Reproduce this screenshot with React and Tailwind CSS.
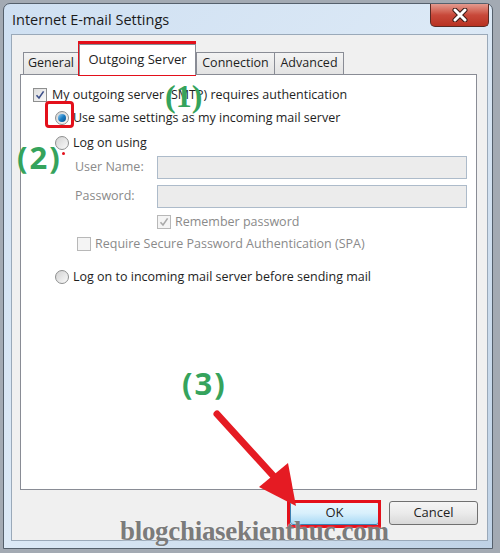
import React from 'react';

const UI = { fontFamily: '"Open Sans", "Noto Sans", sans-serif' };

function CheckBox({ checked, disabled }) {
  return (
    <span
      className={`flex h-[14px] w-[14px] shrink-0 items-center justify-center border ${
        disabled ? 'border-[#b8b8b8] bg-[#f4f4f4]' : 'border-[#8e8f8f] bg-gradient-to-br from-[#dcdcdc] to-[#fbfbfb]'
      }`}
    >
      {checked && (
        <svg width="10" height="10" viewBox="0 0 10 10">
          <path
            d="M1.5 5.2 L4 8 L8.6 1.4"
            fill="none"
            stroke={disabled ? '#a9a9a9' : '#3c4f8a'}
            strokeWidth="1.6"
          />
        </svg>
      )}
    </span>
  );
}

function Radio({ checked }) {
  return (
    <span className="flex h-[14px] w-[14px] shrink-0 items-center justify-center rounded-full border border-[#8e8f8f] bg-gradient-to-br from-[#d2d2d2] to-[#fafafa]">
      {checked && (
        <span className="h-[8px] w-[8px] rounded-full bg-gradient-to-br from-[#8fd0f4] via-[#1b7fc4] to-[#0b4d8c]" />
      )}
    </span>
  );
}

function Tab({ label, active, w }) {
  if (active) {
    return (
      <div
        className={`relative z-10 -mb-px flex h-[31px] items-start justify-center border border-b-0 border-[#898c95] bg-white pt-[5px] text-[13px] text-[#1e1e1e] ${w}`}
      >
        {label}
      </div>
    );
  }
  return (
    <div
      className={`flex h-[22px] items-center justify-center border border-b-0 border-[#898c95] bg-gradient-to-b from-[#f3f3f3] to-[#e3e3e3] text-[12.5px] text-[#1e1e1e] ${w}`}
    >
      {label}
    </div>
  );
}

export default function App() {
  return (
    <div className="relative h-[553px] w-[500px] overflow-hidden bg-[#a3aab3]" style={UI}>
      {/* window */}
      <div className="ml-[3px] pt-[3px]">
        <div className="flex h-[546px] w-[490px] flex-col rounded-t-[7px] border border-[#55606c] bg-gradient-to-br from-[#cfe0f2] via-[#dce9f6] to-[#bfd2e6]">
          {/* title bar */}
          <div className="flex h-[30px] shrink-0 items-start justify-between">
            <div className="pl-[8px] pt-[7px] text-[14.5px] leading-[18px] text-[#1b1b1b]">Internet E-mail Settings</div>
            <div className="mr-[3px] flex h-[23px] w-[59px] items-center justify-center rounded-b-[5px] border border-t-0 border-[#5a2a24] bg-gradient-to-b from-[#e39a8f] via-[#c8483a] to-[#b83222]">
              <svg width="16" height="14" viewBox="0 0 16 14">
                <path d="M3 2 L13 12 M13 2 L3 12" stroke="#3a1a16" strokeWidth="5" strokeLinecap="round" />
                <path d="M3 2 L13 12 M13 2 L3 12" stroke="#ffffff" strokeWidth="3" strokeLinecap="round" />
              </svg>
            </div>
          </div>

          {/* body */}
          <div className="ml-[7px] flex h-[507px] w-[477px] flex-col border border-[#9aa9b9] bg-[#f0f0f0]">
            {/* tabs */}
            <div className="mt-[8px] flex h-[31px] items-end pl-[11px]">
              <Tab label="General" w="w-[56px]" />
              <Tab label="Outgoing Server" active w="w-[117px]" />
              <Tab label="Connection" w="w-[79px]" />
              <Tab label="Advanced" w="w-[70px] -ml-px" />
            </div>

            {/* panel */}
            <div className="ml-[8px] h-[416px] w-[457px] border border-[#898c95] bg-white pl-[12px] text-[12.5px] text-[#1e1e1e]">
              <div className="mt-[11px] flex h-[18px] items-center gap-[5px]">
                <CheckBox checked />
                <span>My outgoing server (SMTP) requires authentication</span>
              </div>

              <div className="ml-[22px] mt-[5px] flex h-[18px] items-center gap-[4px]">
                <Radio checked />
                <span>Use same settings as my incoming mail server</span>
              </div>

              <div className="ml-[22px] mt-[7px] flex h-[18px] items-center gap-[4px]">
                <Radio />
                <span>Log on using</span>
              </div>

              <div className="ml-[42px] mt-[4px] flex h-[23px] items-center text-[#8a8a8a]">
                <span className="w-[82px]">User Name:</span>
                <div className="h-[23px] w-[310px] border border-[#adbbca] bg-[#ececec]" />
              </div>

              <div className="ml-[42px] mt-[6px] flex h-[23px] items-center text-[#8a8a8a]">
                <span className="w-[82px]">Password:</span>
                <div className="h-[23px] w-[310px] border border-[#adbbca] bg-[#ececec]" />
              </div>

              <div className="ml-[124px] mt-[5px] flex h-[18px] items-center gap-[4px] text-[#8a8a8a]">
                <CheckBox checked disabled />
                <span>Remember password</span>
              </div>

              <div className="ml-[44px] mt-[4px] flex h-[18px] items-center gap-[4px] text-[#8a8a8a]">
                <CheckBox disabled />
                <span>Require Secure Password Authentication (SPA)</span>
              </div>

              <div className="ml-[22px] mt-[15px] flex h-[18px] items-center gap-[4px]">
                <Radio />
                <span>Log on to incoming mail server before sending mail</span>
              </div>
            </div>

            {/* buttons */}
            <div className="mt-[11px] flex justify-end gap-[10px] pr-[9px] text-[13px] text-[#1e1e1e]">
              <button className="flex h-[24px] w-[89px] items-center justify-center rounded-[3px] border border-[#3c7fb1] bg-gradient-to-b from-[#eaf6fd] via-[#d9f0fc] to-[#a7d9f5]">
                OK
              </button>
              <button className="flex h-[24px] w-[89px] items-center justify-center rounded-[3px] border border-[#707070] bg-gradient-to-b from-[#f5f5f5] via-[#ebebeb] to-[#d8d8d8]">
                Cancel
              </button>
            </div>
          </div>
        </div>
      </div>

      {/* annotations */}
      <div className="absolute left-[78px] top-[41px] h-[35px] w-[118px] border-[3px] border-[#e3101b]" />
      <div className="absolute left-[45px] top-[101px] h-[27px] w-[29px] rounded-[4px] border-[3px] border-[#e3101b]" />
      <div className="absolute left-[287px] top-[500px] h-[28px] w-[94px] border-[3px] border-[#e3101b]" />

      <div
        className="absolute left-[165px] top-[80px] text-[32px] font-bold leading-none text-[#35a35c]"
        style={{ fontFamily: '"Liberation Serif", serif' }}
      >
        (1)
      </div>
      <div
        className="absolute left-[17px] top-[142px] text-[31px] font-bold leading-none tracking-[2px] text-[#35a35c]"
        style={{ fontFamily: '"Open Sans", sans-serif' }}
      >
        (2)
      </div>
      <div className="absolute left-[62px] top-[152px] h-[3px] w-[3px] rounded-full bg-[#e3101b]" />
      <div
        className="absolute left-[182px] top-[368px] text-[31px] font-bold leading-none tracking-[2px] text-[#35a35c]"
        style={{ fontFamily: '"Open Sans", sans-serif' }}
      >
        (3)
      </div>

      <svg className="pointer-events-none absolute left-0 top-0" width="500" height="553">
        <line x1="217" y1="414" x2="278" y2="481" stroke="#e51b23" strokeWidth="7" strokeLinecap="round" />
        <polygon points="296,506 259,487 288,463" fill="#e51b23" />
      </svg>

      <div
        className="absolute left-[120px] top-[518px] text-[27px] font-bold leading-none tracking-[-0.3px] text-[#7b7b7b]"
        style={{ fontFamily: '"Liberation Serif", serif', textShadow: '0 0 2px rgba(255,255,255,0.7)' }}
      >
        blogchiasekienthuc.com
      </div>
    </div>
  );
}
